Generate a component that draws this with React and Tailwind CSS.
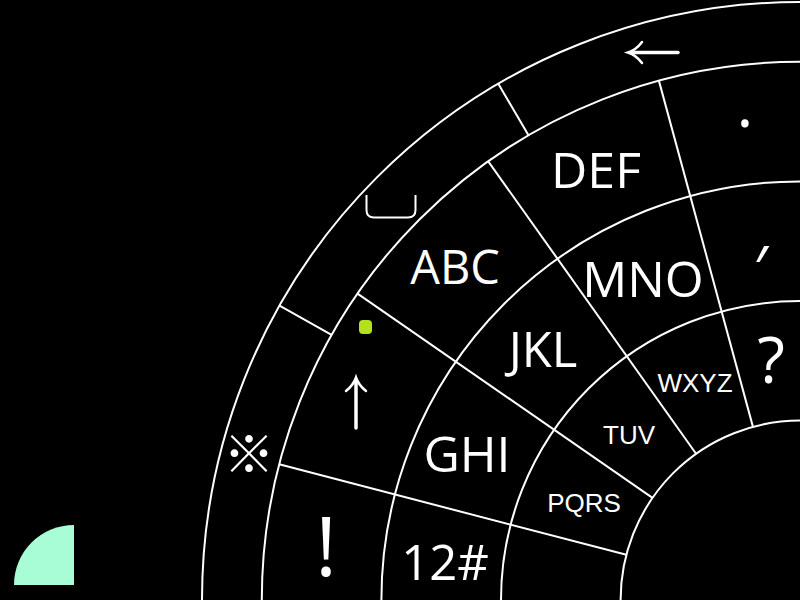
import React from 'react';

const CX = 800;
const CY = 600;
const R = 598;

const rings = [0.3, 0.5, 0.7, 0.9, 1];

// radial dividers: angle in degrees measured up from the left horizontal
const rays = [
    { a: 14.6, from: 0.3, to: 0.9 },
    { a: 34.7, from: 0.3, to: 0.9 },
    { a: 54.6, from: 0.3, to: 0.9 },
    { a: 74.8, from: 0.3, to: 0.9 },
    { a: 29.5, from: 0.9, to: 1 },
    { a: 59.7, from: 0.9, to: 1 },
];

const pt = (a, r) => {
    const rad = (a * Math.PI) / 180;
    return [CX - r * R * Math.cos(rad), CY - r * R * Math.sin(rad)];
};

const big = [
    { t: 'DEF', x: 596, y: 188, s: 50 },
    { t: 'ABC', x: 455, y: 284, s: 47 },
    { t: 'MNO', x: 643, y: 297, s: 50 },
    { t: 'JKL', x: 543, y: 367, s: 49 },
    { t: 'GHI', x: 467, y: 472, s: 50 },
    { t: '12#', x: 445, y: 580, s: 49 },
];

const small = [
    { t: 'WXYZ', x: 695, y: 392 },
    { t: 'TUV', x: 629, y: 444 },
    { t: 'PQRS', x: 584, y: 512 },
];

const Wheel = () => (
    <svg width="800" height="600" viewBox="0 0 800 600" className="block">
        <g fill="none" stroke="#fff" strokeWidth="2">
            {rings.map((r) => (
                <circle key={r} cx={CX} cy={CY} r={r * R} />
            ))}
            {rays.map((l) => {
                const [x1, y1] = pt(l.a, l.from);
                const [x2, y2] = pt(l.a, l.to);
                return <line key={l.a} x1={x1} y1={y1} x2={x2} y2={y2} />;
            })}
        </g>

        {/* space bar glyph */}
        <path
            d="M366.5 195 V210 Q366.5 217.5 374 217.5 H408 Q415.5 217.5 415.5 210 V195"
            fill="none"
            stroke="#fff"
            strokeWidth="2"
        />

        {/* backspace arrow */}
        <g fill="none" stroke="#fff" strokeLinecap="round">
            <path d="M630 52.5 H678" strokeWidth="3.5" />
            <path d="M642 42 Q636 50 628 52.5 Q636 55 642 63" strokeWidth="2.5" />
        </g>

        {/* shift arrow */}
        <g fill="none" stroke="#fff" strokeLinecap="round">
            <path d="M356 380 V428" strokeWidth="3.5" />
            <path d="M346 391 Q353.5 385 356 377.5 Q358.5 385 366 391" strokeWidth="2.5" />
        </g>

        <rect x="359" y="320" width="13" height="14" rx="4" fill="#b3e21c" />

        <g fill="#fff" fontFamily="'Open Sans', 'Noto Sans', sans-serif" textAnchor="middle">
            {big.map((b) => (
                <text key={b.t} x={b.x} y={b.y} fontSize={b.s}>
                    {b.t}
                </text>
            ))}
            <text x="326" y="576" fontSize="82">!</text>
            <text x="771" y="383" fontSize="64">?</text>
            <text x="745" y="127" fontSize="64">.</text>
            <text x="761" y="291" fontSize="62">′</text>
        </g>

        <g fill="#fff" fontFamily="'Liberation Sans', Arial, sans-serif" textAnchor="middle">
            {small.map((b) => (
                <text key={b.t} x={b.x} y={b.y} fontSize="26">
                    {b.t}
                </text>
            ))}
        </g>

        <text
            x="249"
            y="473"
            fontSize="51"
            fill="#fff"
            textAnchor="middle"
            fontFamily="'Noto Sans CJK JP', sans-serif"
        >
            ※
        </text>

        {/* mode indicator */}
        <path d="M74 585 H14 A60 60 0 0 1 74 525 Z" fill="#a8fdd6" />
    </svg>
);

export default function App() {
    return (
        <div className="w-[800px] h-[600px] bg-black overflow-hidden">
            <Wheel />
        </div>
    );
}
